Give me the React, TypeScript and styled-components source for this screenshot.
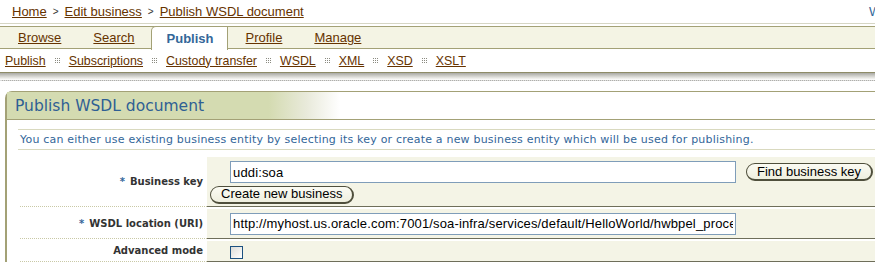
import React from 'react'
import styled, { createGlobalStyle } from 'styled-components'

const GlobalStyle = createGlobalStyle`
  body {
    margin: 0;
    background: #ffffff;
    overflow: hidden;
    font-family: 'Liberation Sans', Arial, sans-serif;
  }
`

const crumbs = ['Home', 'Edit business', 'Publish WSDL document']
const tabs = ['Browse', 'Search', 'Publish', 'Profile', 'Manage']
const subLinks = ['Publish', 'Subscriptions', 'Custody transfer', 'WSDL', 'XML', 'XSD', 'XSLT']

const Separator: React.FC = () => (
  <SepIcon width="5" height="5" viewBox="0 0 5 5">
    {[0, 2, 4].map((y) =>
      [0, 2, 4].map((x) => <rect key={`${x}-${y}`} x={x} y={y} width="1" height="1" fill="#8a8a80" />),
    )}
  </SepIcon>
)

const App: React.FC = () => {
  return (
    <Page>
      <GlobalStyle />
      <TopBar>
        <Breadcrumb>
          {crumbs.map((c, i) => (
            <React.Fragment key={c}>
              {i > 0 && <CrumbArrow>&gt;</CrumbArrow>}
              <Link href="#">{c}</Link>
            </React.Fragment>
          ))}
        </Breadcrumb>
        <UserInfo>Welcome weblogic</UserInfo>
      </TopBar>

      <TabOuter>
        <TabBar>
          {tabs.map((t) =>
            t === 'Publish' ? (
              <ActiveTab key={t}>{t}</ActiveTab>
            ) : (
              <Tab key={t}>
                <Link href="#">{t}</Link>
              </Tab>
            ),
          )}
        </TabBar>
      </TabOuter>

      <SubNav>
        {subLinks.map((s, i) => (
          <React.Fragment key={s}>
            {i > 0 && <Separator />}
            <SubLink href="#">{s}</SubLink>
          </React.Fragment>
        ))}
      </SubNav>
      <Shadow />

      <Panel>
        <PanelHeader>Publish WSDL document</PanelHeader>
        <InfoRow>
          You can either use existing business entity by selecting its key or create a new business entity which will
          be used for publishing.
        </InfoRow>

        <Form>
          <FormRow>
            <LabelCell>
              <Required>*</Required>
              Business key
            </LabelCell>
            <FieldCell>
              <FieldLine>
                <TextInput defaultValue="uddi:soa" />
                <PillButton>Find business key</PillButton>
              </FieldLine>
              <PillButton>Create new business</PillButton>
            </FieldCell>
          </FormRow>

          <FormRow>
            <LabelCell>
              <Required>*</Required>
              WSDL location (URI)
            </LabelCell>
            <FieldCell>
              <FieldLine>
                <TextInput defaultValue="http://myhost.us.oracle.com:7001/soa-infra/services/default/HelloWorld/hwbpel_process?WSDL" />
              </FieldLine>
            </FieldCell>
          </FormRow>

          <FormRow>
            <LabelCell>Advanced mode</LabelCell>
            <FieldCell $tight>
              <CheckBox />
            </FieldCell>
          </FormRow>
        </Form>
      </Panel>
    </Page>
  )
}

const Page = styled.div`
  width: 1000px;
`

const TopBar = styled.div`
  display: flex;
  height: 23px;
  align-items: center;
  padding-left: 12px;
`

const Breadcrumb = styled.div`
  flex: 0 0 857px;
  display: flex;
  align-items: center;
  font-size: 13px;
`

const CrumbArrow = styled.span`
  font-size: 10px;
  color: #333333;
  margin: 0 6px;
`

const Link = styled.a`
  color: #663300;
  text-decoration: underline;
  font-size: 13px;
`

const SubLink = styled(Link)`
  font-size: 12.4px;
`

const UserInfo = styled.span`
  color: #336699;
  font-size: 13px;
  white-space: nowrap;
`

const TabOuter = styled.div`
  border-top: 1px solid #d6d6c4;
  padding-top: 2px;
`

const TabBar = styled.div`
  display: flex;
  height: 21px;
  background: #f4f4e4;
  border-top: 1px solid #a3a176;
  border-bottom: 1px solid #a3a176;
  padding-left: 2px;
`

const Tab = styled.div`
  display: flex;
  align-items: center;
  padding: 0 16px;
`

const ActiveTab = styled.div`
  display: flex;
  align-items: center;
  height: 23px;
  margin-top: -1px;
  padding: 0 13px 0 15px;
  margin-right: 2px;
  background: #ffffff;
  border: 1px solid #a3a176;
  border-bottom: none;
  border-top-left-radius: 5px;
  color: #336699;
  font-weight: bold;
  font-size: 13px;
`

const SubNav = styled.div`
  display: flex;
  align-items: center;
  height: 23px;
  padding-left: 5px;
  border-bottom: 1px solid #8e8c68;
`

const SepIcon = styled.svg`
  margin: 0 9px;
`

const Shadow = styled.div`
  height: 7px;
  background: linear-gradient(#a9a9a4, #e8e8e4 70%, #ffffff);
  border-bottom: 1px dotted #dcdcdc;
`

const Panel = styled.div`
  margin: 10px 0 0 5px;
  border-left: 2px solid #a3a176;
  border-top: 1px solid #a3a176;
  border-top-left-radius: 7px;
`

const PanelHeader = styled.div`
  height: 27px;
  display: flex;
  align-items: center;
  padding-left: 8px;
  font-family: 'DejaVu Sans', Verdana, sans-serif;
  font-size: 15.5px;
  color: #2f5f94;
  background: linear-gradient(to right, #d4dbb1 0, #d4dbb1 262px, #e9eadb 300px, #ffffff 333px);
  border-bottom: 1px solid #a3a176;
`

const InfoRow = styled.div`
  margin: 9px 0 0 11px;
  height: 19px;
  display: flex;
  align-items: center;
  padding-left: 2px;
  border-top: 1px solid #d9d9bf;
  border-bottom: 1px solid #d9d9bf;
  font-family: 'DejaVu Sans', Verdana, sans-serif;
  font-size: 11px;
  letter-spacing: 0.2px;
  color: #336699;
  white-space: nowrap;
`

const Form = styled.div`
  margin: 7px 0 0 13px;
`

const FormRow = styled.div`
  display: grid;
  grid-template-columns: 187px 1fr;
  margin-bottom: 2px;
`

const LabelCell = styled.div`
  display: flex;
  align-items: center;
  justify-content: flex-end;
  padding-right: 4px;
  border-bottom: 1px dotted #c9c9a6;
  font-family: 'DejaVu Sans', Verdana, sans-serif;
  font-weight: bold;
  font-size: 10px;
  color: #333333;
`

const Required = styled.span`
  color: #336699;
  margin-right: 5px;
`

const FieldCell = styled.div<{ $tight?: boolean }>`
  background: #f4f4e6;
  border-bottom: 1px solid #6e6e5a;
  padding: ${({ $tight }) => ($tight ? '5px 0 2px 23px' : '4px 0 2px 3px')};
`

const FieldLine = styled.div`
  display: flex;
  align-items: center;
  gap: 10px;
  padding-left: 20px;
  margin-bottom: 1px;
`

const TextInput = styled.input`
  box-sizing: border-box;
  width: 506px;
  height: 22px;
  border: 1px solid #7f9db9;
  padding: 0 2px;
  font-family: 'Liberation Sans', Arial, sans-serif;
  font-size: 13px;
  letter-spacing: 0.15px;
  color: #000000;
  background: #ffffff;
  outline: none;
`

const PillButton = styled.button`
  box-sizing: border-box;
  height: 18px;
  padding: 0 10px;
  border: 1px solid #4f4f3c;
  border-bottom-width: 2px;
  border-right-width: 2px;
  border-radius: 9px;
  background: linear-gradient(#fbfbf3, #efefdf);
  font-family: 'Liberation Sans', Arial, sans-serif;
  font-size: 13px;
  line-height: 14px;
  color: #000000;
`

const CheckBox = styled.span`
  display: block;
  box-sizing: border-box;
  width: 13px;
  height: 13px;
  border: 1px solid #1c5180;
  background: linear-gradient(135deg, #dcdcd7, #ffffff);
`

export default App
